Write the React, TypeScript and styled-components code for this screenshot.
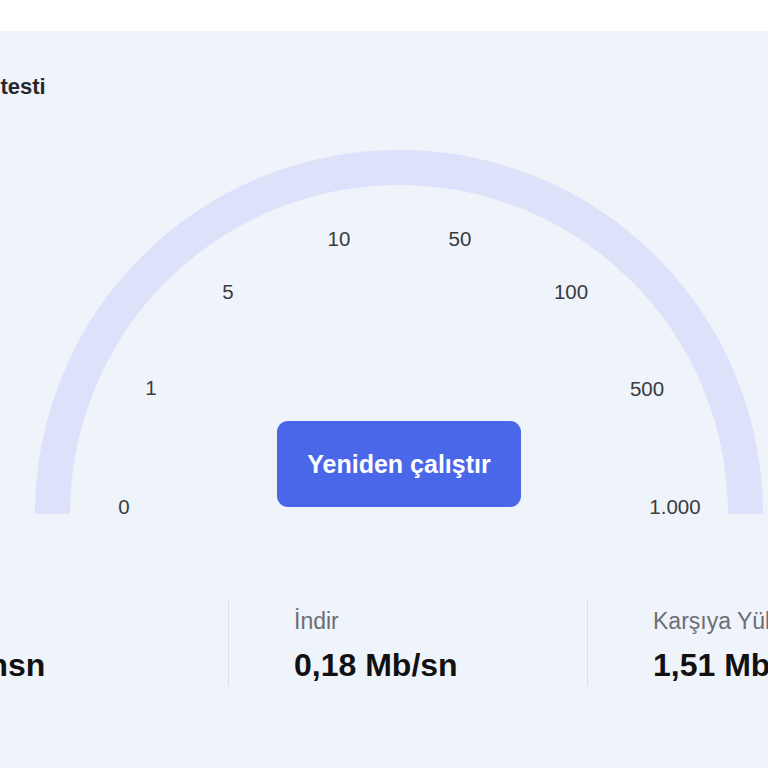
import React from "react";
import styled, { createGlobalStyle } from "styled-components";

const GlobalStyle = createGlobalStyle`
  html, body {
    margin: 0;
    padding: 0;
    background: #ffffff;
    overflow: hidden;
  }
  body {
    font-family: "Liberation Sans", Arial, sans-serif;
  }
`;

const TICKS = [
  { label: "0", x: 89, y: 356 },
  { label: "1", x: 116, y: 237 },
  { label: "5", x: 193, y: 141 },
  { label: "10", x: 304, y: 88 },
  { label: "50", x: 425, y: 88 },
  { label: "100", x: 536, y: 141 },
  { label: "500", x: 612, y: 238 },
  { label: "1.000", x: 640, y: 356 },
];

const STATS = [
  { label: "Ping", value: "12 msn" },
  { label: "İndir", value: "0,18 Mb/sn" },
  { label: "Karşıya Yükle", value: "1,51 Mb/sn" },
];

const Page = styled.div`
  width: 768px;
  height: 768px;
  overflow: hidden;
`;

const TopBar = styled.div`
  height: 31px;
  background: #ffffff;
`;

const Panel = styled.section`
  width: 1076px;
  height: 737px;
  margin-left: -139px;
  background: #eff3fa;
  display: flex;
  flex-direction: column;
`;

const Title = styled.h2`
  margin: 43px 0 0;
  padding-left: 16px;
  font-size: 22px;
  line-height: 26px;
  font-weight: 700;
  color: #26282c;
`;

const GaugeWrap = styled.div`
  position: relative;
  align-self: center;
  width: 728px;
  height: 364px;
  margin-top: 50px;
`;

const Arc = styled.path`
  fill: none;
  stroke: #dde1fa;
  stroke-width: 35;
`;

const Tick = styled.text`
  font-family: "Liberation Sans", Arial, sans-serif;
  font-size: 20.5px;
  fill: #3a3c40;
`;

const RunButton = styled.button`
  position: absolute;
  left: 242px;
  bottom: 7px;
  width: 244px;
  height: 86px;
  border: 0;
  border-radius: 11px;
  background: #4a67ea;
  color: #ffffff;
  font-family: "Liberation Sans", Arial, sans-serif;
  font-size: 25px;
  font-weight: 700;
  cursor: pointer;
`;

const StatsRow = styled.div`
  display: grid;
  grid-template-columns: repeat(3, 359px);
  padding-left: 8px;
  margin-top: 86px;
`;

const Stat = styled.div<{ $divider: boolean }>`
  height: 86px;
  padding-left: 65px;
  border-left: 1px solid ${({ $divider }) => ($divider ? "#dcdfe6" : "transparent")};
  display: flex;
  flex-direction: column;
  gap: 13px;
  white-space: nowrap;
`;

const StatLabel = styled.div`
  margin-top: 8px;
  font-size: 23px;
  line-height: 26px;
  color: #6b6f75;
`;

const StatValue = styled.div`
  font-size: 32px;
  line-height: 36px;
  font-weight: 700;
  color: #111111;
`;

const Gauge = () => (
  <GaugeWrap>
    <svg width="728" height="364" viewBox="0 0 728 364">
      <Arc d="M 17.5 364 A 346.5 346.5 0 0 1 710.5 364" />
      {TICKS.map((t) => (
        <Tick key={t.label} x={t.x} y={t.y} textAnchor="middle" dominantBaseline="central">
          {t.label}
        </Tick>
      ))}
    </svg>
    <RunButton>Yeniden çalıştır</RunButton>
  </GaugeWrap>
);

export default function App() {
  return (
    <Page>
      <GlobalStyle />
      <TopBar />
      <Panel>
        <Title>İnternet hız testi</Title>
        <Gauge />
        <StatsRow>
          {STATS.map((s, i) => (
            <Stat key={s.label} $divider={i > 0}>
              <StatLabel>{s.label}</StatLabel>
              <StatValue>{s.value}</StatValue>
            </Stat>
          ))}
        </StatsRow>
      </Panel>
    </Page>
  );
}
